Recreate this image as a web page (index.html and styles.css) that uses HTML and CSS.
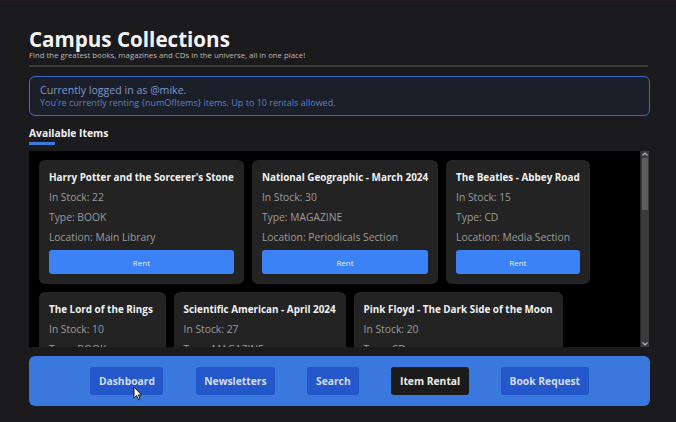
FILE: index.html
```html
<!DOCTYPE html>
<html lang="en">
<head>
<meta charset="utf-8">
<title>Campus Collections</title>
<link rel="stylesheet" href="styles.css">
</head>
<body>
<div class="page">
  <header class="header">
    <h1 class="title">Campus Collections</h1>
    <p class="subtitle">Find the greatest books, magazines and CDs in the universe, all in one place!</p>
  </header>
  <div class="divider"></div>
  <div class="info">
    <p class="info-main">Currently logged in as @mike.</p>
    <p class="info-sub">You're currently renting {numOfItems} items. Up to 10 rentals allowed.</p>
  </div>
  <h2 class="section-title">Available Items</h2>
  <div class="section-bar"></div>
  <div class="scroller">
    <div class="items">
      <div class="card">
        <div class="card-title">Harry Potter and the Sorcerer's Stone</div>
        <div class="card-line">In Stock: 22</div>
        <div class="card-line">Type: BOOK</div>
        <div class="card-line">Location: Main Library</div>
        <button class="rent">Rent</button>
      </div>
      <div class="card">
        <div class="card-title">National Geographic - March 2024</div>
        <div class="card-line">In Stock: 30</div>
        <div class="card-line">Type: MAGAZINE</div>
        <div class="card-line">Location: Periodicals Section</div>
        <button class="rent">Rent</button>
      </div>
      <div class="card">
        <div class="card-title">The Beatles - Abbey Road</div>
        <div class="card-line">In Stock: 15</div>
        <div class="card-line">Type: CD</div>
        <div class="card-line">Location: Media Section</div>
        <button class="rent">Rent</button>
      </div>
      <div class="card">
        <div class="card-title">The Lord of the Rings</div>
        <div class="card-line">In Stock: 10</div>
        <div class="card-line">Type: BOOK</div>
        <div class="card-line">Location: Main Library</div>
        <button class="rent">Rent</button>
      </div>
      <div class="card">
        <div class="card-title">Scientific American - April 2024</div>
        <div class="card-line">In Stock: 27</div>
        <div class="card-line">Type: MAGAZINE</div>
        <div class="card-line">Location: Periodicals</div>
        <button class="rent">Rent</button>
      </div>
      <div class="card">
        <div class="card-title">Pink Floyd - The Dark Side of the Moon</div>
        <div class="card-line">In Stock: 20</div>
        <div class="card-line">Type: CD</div>
        <div class="card-line">Location: Media Section</div>
        <button class="rent">Rent</button>
      </div>
    </div>
    <div class="scrollbar">
      <svg class="arrow" width="8" height="6" viewBox="0 0 8 6"><path d="M1.5 4.5 L4 2 L6.5 4.5" fill="none" stroke="#b5b5b5" stroke-width="1.2"/></svg>
      <div class="track"><div class="thumb"></div></div>
      <svg class="arrow" width="8" height="6" viewBox="0 0 8 6"><path d="M1.5 1.5 L4 4 L6.5 1.5" fill="none" stroke="#b5b5b5" stroke-width="1.2"/></svg>
    </div>
  </div>
  <nav class="nav">
    <button class="nav-btn">Dashboard</button>
    <button class="nav-btn">Newsletters</button>
    <button class="nav-btn">Search</button>
    <button class="nav-btn active">Item Rental</button>
    <button class="nav-btn">Book Request</button>
  </nav>
  <svg class="cursor" width="10" height="15" viewBox="0 0 10 15"><path d="M1 1 L1 12 L3.6 9.6 L5.4 13.6 L7 12.9 L5.3 9 L8.6 9 Z" fill="#ffffff" stroke="#111" stroke-width="1"/></svg>
</div>
</body>
</html>
```
FILE: styles.css
```css
* { box-sizing: border-box; }
html, body { margin: 0; padding: 0; }
body {
  background: #1b1b1d;
  font-family: "Open Sans", "Noto Sans", sans-serif;
  color: #fff;
  width: 676px;
  height: 422px;
  overflow: hidden;
  border-top: 1px solid #2c1c20;
}
.page {
  position: relative;
  padding: 26px 26px 0 29px;
  display: flex;
  flex-direction: column;
}
.header { display: flex; flex-direction: column; }
.title {
  margin: 0;
  font-size: 20.6px;
  line-height: 24px;
  font-weight: 700;
  color: #f4f4f4;
}
.subtitle {
  margin: 0;
  font-size: 7.8px;
  line-height: 8px;
  color: #b9b9b9;
}
.divider {
  margin-top: 6px;
  height: 2px;
  background: #3a3a3a;
  margin-right: 2px;
}
.info {
  margin-top: 9px;
  border: 1.5px solid #3e67c2;
  border-radius: 6px;
  background: #1a1f29;
  padding: 5.5px 10px 6.5px 10px;
}
.info p { margin: 0; }
.info-main {
  font-size: 10.6px;
  line-height: 14px;
  color: #7f97cb;
}
.info-sub {
  font-size: 9px;
  line-height: 12px;
  color: #5c7fc6;
}
.section-title {
  margin: 10px 0 0 0;
  font-size: 10.3px;
  line-height: 14px;
  font-weight: 700;
  color: #f2f2f2;
}
.section-bar {
  margin-top: 2px;
  width: 26px;
  height: 3px;
  background: #3a7be0;
}
.scroller {
  margin-top: 6px;
  margin-right: 1px;
  height: 196px;
  background: #000;
  display: flex;
  overflow: hidden;
}
.items {
  flex: 1;
  padding: 9px 10px;
  display: flex;
  flex-wrap: wrap;
  align-content: flex-start;
  gap: 8px;
}
.card {
  background: #232323;
  border-radius: 6px;
  padding: 10px;
  display: flex;
  flex-direction: column;
}
.card-title {
  font-size: 9.9px;
  line-height: 14px;
  font-weight: 700;
  color: #f2f2f2;
  white-space: nowrap;
}
.card-line {
  margin-top: 6px;
  font-size: 10.3px;
  line-height: 14px;
  color: #9b9b9b;
  white-space: nowrap;
}
.rent {
  margin-top: 6px;
  height: 24px;
  border: 0;
  border-radius: 3px;
  background: #3b82f6;
  color: #e6eefc;
  font-family: inherit;
  font-size: 8px;
  padding: 0;
}
.scrollbar {
  width: 9px;
  background: #3b3b3b;
  display: flex;
  flex-direction: column;
  align-items: center;
  border-left: 1px solid #2a2a2a;
}
.arrow { display: block; flex: none; }
.track {
  flex: 1;
  width: 100%;
  padding: 1px 1px 0 1px;
}
.thumb {
  height: 52px;
  background: #5d5d5d;
  border-radius: 1px;
}
.nav {
  margin-top: 9px;
  height: 50px;
  background: #3a78de;
  border-radius: 6px;
  display: flex;
  justify-content: center;
  align-items: center;
  gap: 32.3px;
}
.nav-btn {
  height: 28px;
  padding: 0 8.5px;
  border: 0;
  border-radius: 3px;
  background: #2457c9;
  color: #d3def5;
  font-family: inherit;
  font-size: 10.3px;
  font-weight: 700;
}
.nav-btn.active {
  background: #1b1b1c;
  color: #ececec;
}
.cursor {
  position: absolute;
  left: 133px;
  top: 385px;
}
```
